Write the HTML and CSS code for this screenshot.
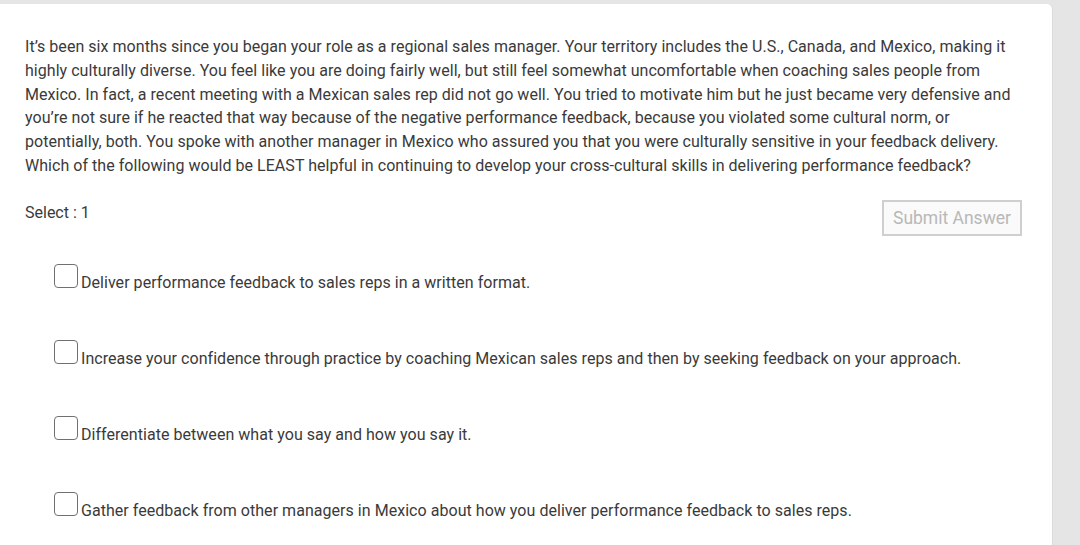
FILE: index.html
```html
<!DOCTYPE html>
<html>
<head>
<meta charset="utf-8">
<link rel="stylesheet" href="styles.css">
</head>
<body>
<div class="page">
  <div class="card">
    <p class="question">It’s been six months since you began your role as a regional sales manager. Your territory includes the U.S., Canada, and Mexico, making it highly culturally diverse. You feel like you are doing fairly well, but still feel somewhat uncomfortable when coaching sales people from Mexico. In fact, a recent meeting with a Mexican sales rep did not go well. You tried to motivate him but he just became very defensive and you’re not sure if he reacted that way because of the negative performance feedback, because you violated some cultural norm, or potentially, both. You spoke with another manager in Mexico who assured you that you were culturally sensitive in your feedback delivery. Which of the following would be LEAST helpful in continuing to develop your cross-cultural skills in delivering performance feedback?</p>
    <div class="toolbar">
      <span class="select">Select : 1</span>
      <button class="submit">Submit Answer</button>
    </div>
    <ul class="options">
      <li class="option"><span class="box"></span><span class="label">Deliver performance feedback to sales reps in a written format.</span></li>
      <li class="option"><span class="box"></span><span class="label">Increase your confidence through practice by coaching Mexican sales reps and then by seeking feedback on your approach.</span></li>
      <li class="option"><span class="box"></span><span class="label">Differentiate between what you say and how you say it.</span></li>
      <li class="option"><span class="box"></span><span class="label">Gather feedback from other managers in Mexico about how you deliver performance feedback to sales reps.</span></li>
    </ul>
  </div>
</div>
</body>
</html>
```

FILE: styles.css
```css
html, body {
  margin: 0;
  padding: 0;
  background: #e5e5e5;
  height: 100%;
  overflow: hidden;
}
.page {
  padding-top: 4px;
  padding-right: 28px;
  height: 100%;
  box-sizing: border-box;
}
.card {
  background: #fff;
  border-top-right-radius: 5px;
  box-shadow: 1px 0 0 #dadada;
  height: 100%;
  padding: 31px 30px 0 25px;
  box-sizing: border-box;
  font-family: Roboto, "Liberation Sans", sans-serif;
  color: #3a3a3a;
}
.question {
  margin: 0;
  font-size: 16px;
  line-height: 23.8px;
  letter-spacing: 0.04px;
}
.toolbar {
  display: flex;
  justify-content: space-between;
  align-items: flex-start;
  margin-top: 23px;
}
.select {
  font-size: 16px;
  line-height: 23px;
}
.submit {
  font-family: Roboto, "Liberation Sans", sans-serif;
  font-size: 17.5px;
  color: #b8b8b8;
  background: #fafafa;
  border: 2px solid #cfcfcf;
  padding: 0 9px;
  height: 36px;
  margin-top: -1px;
  cursor: default;
}
.options {
  list-style: none;
  margin: 27px 0 0 29px;
  padding: 0;
}
.option {
  display: flex;
  align-items: flex-end;
  height: 25px;
  margin-bottom: 51px;
}
.box {
  width: 22px;
  height: 22px;
  border: 1.5px solid #707070;
  border-radius: 4px;
  flex: none;
  margin-right: 3px;
}
.label {
  font-size: 16px;
  line-height: 18px;
  margin-bottom: -4px;
  letter-spacing: 0.04px;
}
```
